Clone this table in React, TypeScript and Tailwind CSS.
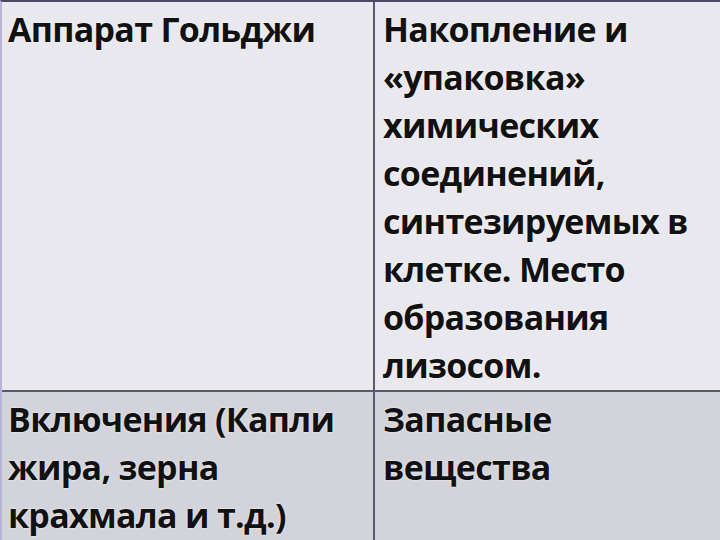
const ROWS = [
  {
    name: "Аппарат Гольджи",
    text: "Накопление и «упаковка» химических соединений, синтезируемых в клетке. Место образования лизосом.",
    bg: "bg-[#e8e8ee]",
    h: "h-[390px]",
  },
  {
    name: "Включения (Капли жира, зерна крахмала и т.д.)",
    text: "Запасные вещества",
    bg: "bg-[#d3d3db]",
    h: "h-[150px]",
  },
];

export default function App() {
  return (
    <div
      className="h-[540px] w-[720px] overflow-hidden border-t-2 border-l-2 border-t-[#4b4a5e] border-l-[#b8b4d4] bg-[#d3d3db] text-[#111] [text-shadow:0_0_2px_#ffffff]"
      style={{ fontFamily: '"Open Sans", "Noto Sans", sans-serif' }}
    >
      {ROWS.map((r, i) => (
        <div
          key={i}
          className={`grid grid-cols-[373px_1fr] ${r.h} ${r.bg} ${i === 0 ? "border-b-2 border-b-[#5b5a6c]" : ""}`}
        >
          <div className="border-r-2 border-r-[#5b5a6c] px-[6px] pt-[3px] text-[34px] font-bold leading-[48px] tracking-[-0.7px]">
            {r.name}
          </div>
          <div className="pl-[8px] pr-2 pt-[3px] text-[34px] font-bold leading-[48px] tracking-[-0.7px]">
            {r.text}
          </div>
        </div>
      ))}
    </div>
  );
}
